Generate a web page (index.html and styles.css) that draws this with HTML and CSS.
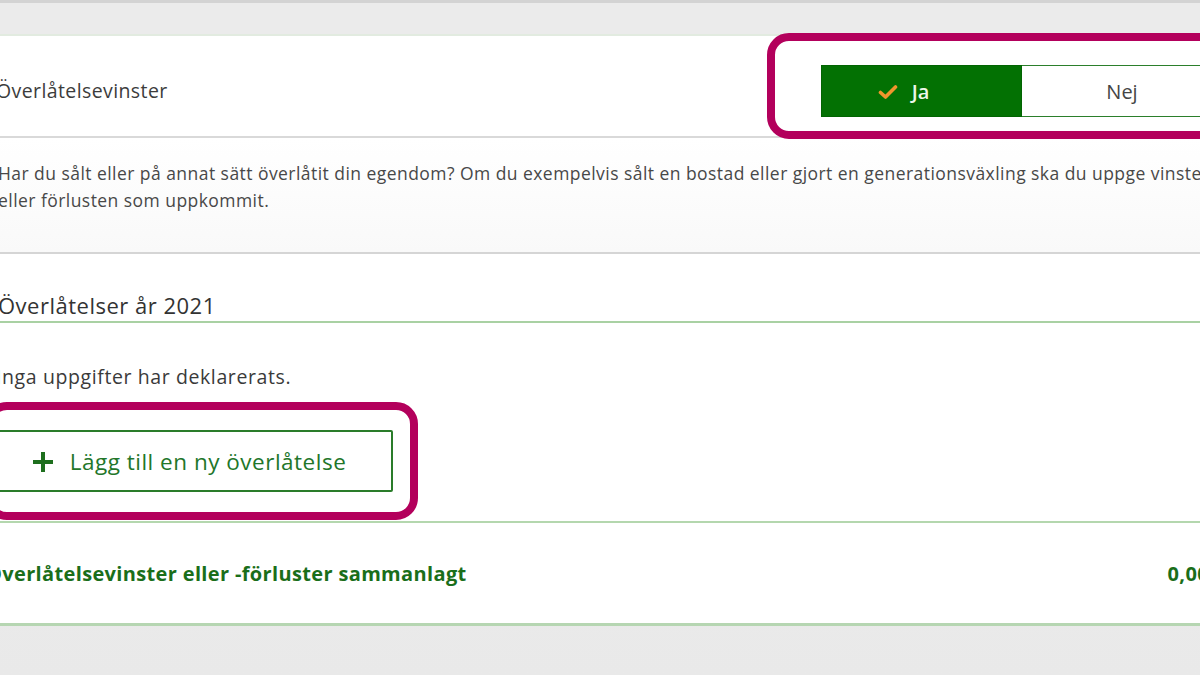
FILE: index.html
```html
<!DOCTYPE html>
<html lang="sv">
<head>
<meta charset="utf-8">
<title>Överlåtelsevinster</title>
<link rel="stylesheet" href="styles.css">
</head>
<body>
<div class="topband"></div>
<main class="page">
  <section class="question">
    <span class="q-label">Överlåtelsevinster</span>
    <div class="toggle highlight">
      <button class="seg seg-on" type="button">
        <svg class="check" viewBox="0 0 20 16" width="20" height="16" aria-hidden="true"><path d="M2.5 8.5 L7.5 13 L17.5 3" fill="none" stroke="#f0952d" stroke-width="3.6" stroke-linecap="round" stroke-linejoin="round"/></svg>
        <span>Ja</span>
      </button>
      <button class="seg seg-off" type="button">Nej</button>
    </div>
  </section>
  <section class="desc">
    <p>Har du sålt eller på annat sätt överlåtit din egendom? Om du exempelvis sålt en bostad eller gjort en generationsväxling ska du uppge vinsten eller förlusten som uppkommit.</p>
  </section>
  <section class="transfers">
    <h2 class="t-head">Överlåtelser år 2021</h2>
    <p class="empty">Inga uppgifter har deklarerats.</p>
    <div class="add-wrap">
      <button class="add highlight" type="button">
        <svg class="plus" viewBox="0 0 22 22" width="22" height="22" aria-hidden="true"><path d="M11 1 V21 M1 11 H21" stroke="#1e6f1e" stroke-width="4" fill="none"/></svg>
        <span>Lägg till en ny överlåtelse</span>
      </button>
    </div>
  </section>
  <section class="total">
    <span class="total-label">Överlåtelsevinster eller -förluster sammanlagt</span>
    <span class="total-value">0,00</span>
  </section>
</main>
</body>
</html>
```

FILE: styles.css
```css
html, body {
  margin: 0;
  padding: 0;
}
body {
  width: 1200px;
  height: 675px;
  overflow: hidden;
  background: linear-gradient(#f3f3f3, #e9e9e9);
  font-family: "Open Sans", "Noto Sans", sans-serif;
  color: #3a3a3a;
}
.topband {
  height: 31px;
  background: #ebebeb;
  border-top: 3px solid #d3d3d3;
  border-bottom: 2px solid #e2ebe0;
}
.page {
  width: 1230px;
  margin-left: -4px;
  background: #fff;
}
.question {
  display: flex;
  align-items: center;
  justify-content: space-between;
  padding: 29px 0 19px 0;
  border-bottom: 2px solid #d9d9d9;
}
.q-label {
  font-size: 19.5px;
  letter-spacing: 0.4px;
  color: #3c3c3c;
  margin-top: -2px;
}
.toggle {
  display: flex;
  width: 402px;
  height: 52px;
  margin-right: 3px;
}
.highlight {
  position: relative;
}
.highlight::before {
  content: "";
  position: absolute;
  border: 8px solid #b3005c;
  border-radius: 22px;
  pointer-events: none;
}
.toggle::before {
  top: -32px;
  left: -54px;
  right: -60px;
  bottom: -22px;
}
.seg {
  flex: 0 0 201px;
  box-sizing: border-box;
  display: flex;
  align-items: center;
  justify-content: center;
  gap: 14px;
  font-family: inherit;
  font-size: 20px;
  border: 0;
  margin: 0;
  padding: 0;
}
.seg-on {
  background: #037103;
  color: #eef7ea;
  font-weight: 600;
  border: 1px solid #026402;
  padding-right: 36px;
}
.check {
  margin-top: 1px;
}
.seg-off {
  background: #fff;
  color: #454545;
  border: 1px solid #2b7f2b;
  border-left: 0;
}
.desc {
  padding: 22px 0 38px 2px;
  border-bottom: 2px solid #d5d5d5;
  background: linear-gradient(#ffffff, #f9f9f9);
}
.desc p {
  margin: 0;
  font-size: 17.5px;
  letter-spacing: 0.45px;
  line-height: 27px;
  color: #484848;
}
.transfers {
  padding: 37px 0 0 0;
  border-bottom: 2px solid #b4d7ae;
}
.t-head {
  margin: 0;
  padding: 0 0 2px 2px;
  font-size: 22px;
  letter-spacing: 0.5px;
  font-weight: 500;
  color: #333;
  line-height: 28px;
  border-bottom: 2px solid #a9d1a3;
}
.empty {
  margin: 0;
  padding: 41px 0 0 0;
  font-size: 19.5px;
  letter-spacing: 0.6px;
  line-height: 26px;
  color: #3a3a3a;
}
.add-wrap {
  padding: 40px 0 29px 0;
}
.add {
  display: flex;
  align-items: center;
  justify-content: center;
  gap: 16px;
  width: 400px;
  height: 62px;
  margin-left: -3px;
  background: #fff;
  border: 2px solid #2a7c2a;
  border-radius: 2px;
  font-family: inherit;
  font-size: 22.5px;
  letter-spacing: 0.5px;
  color: #22762a;
  padding: 0 8px 0 0;
}
.add::before {
  top: -30px;
  left: -10px;
  right: -27px;
  bottom: -30px;
  border-radius: 22px;
}
.plus {
  margin-top: 1px;
}
.total {
  display: flex;
  align-items: center;
  justify-content: space-between;
  height: 100px;
  padding: 0 17px 0 0;
  margin-left: -10px;
  border-bottom: 3px solid #b6d6b2;
}
.total-label,
.total-value {
  font-size: 20px;
  letter-spacing: 0.35px;
  font-weight: 700;
  color: #1a6e1a;
}
```
